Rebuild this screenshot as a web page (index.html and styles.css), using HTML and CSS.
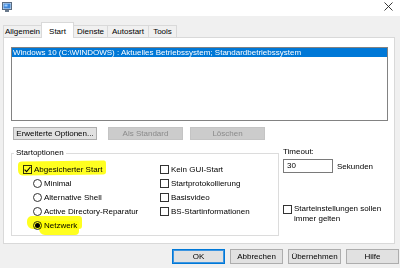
FILE: index.html
```html
<!DOCTYPE html>
<html>
<head>
<meta charset="utf-8">
<link rel="stylesheet" href="styles.css">
</head>
<body>
<div class="window">
  <div class="titlebar">
    <svg class="appicon" width="10" height="10" viewBox="0 0 10 10">
      <rect x="0.5" y="0.5" width="9" height="7" fill="#dfe6ee" stroke="#5a6b80"/>
      <rect x="1.5" y="1.5" width="7" height="5" fill="#3f86d8"/>
      <rect x="2.5" y="2.5" width="3" height="2" fill="#9fd0ff"/>
      <rect x="3" y="8" width="4" height="2" fill="#6a7a8c"/>
    </svg>
    <svg class="close" width="9" height="9" viewBox="0 0 9 9">
      <path d="M0.5 0.5 L8.5 8.5 M8.5 0.5 L0.5 8.5" stroke="#222" stroke-width="0.9" fill="none"/>
    </svg>
  </div>
  <div class="tabs">
    <div class="tab t1">Allgemein</div>
    <div class="tab t2 active">Start</div>
    <div class="tab t3">Dienste</div>
    <div class="tab t4">Autostart</div>
    <div class="tab t5">Tools</div>
  </div>
  <div class="panel">
    <div class="listbox">
      <div class="item selected">Windows 10 (C:\WINDOWS) : Aktuelles Betriebssystem; Standardbetriebssystem</div>
    </div>
    <div class="btnrow">
      <div class="btn wide">Erweiterte Optionen...</div>
      <div class="btn disabled">Als Standard</div>
      <div class="btn disabled">Löschen</div>
    </div>
    <div class="lower">
      <fieldset class="group">
        <legend>Startoptionen</legend>
        <div class="groupbody">
          <div class="col leftcol">
            <div class="row"><span class="cb checked"><svg width="7" height="7" viewBox="0 0 7 7"><path d="M0.6 3.6 L2.6 5.6 L6.4 1" stroke="#000" stroke-width="1.1" fill="none"/></svg></span>Abgesicherter Start</div>
            <div class="row sub"><span class="rb"></span>Minimal</div>
            <div class="row sub"><span class="rb"></span>Alternative Shell</div>
            <div class="row sub"><span class="rb"></span>Active Directory-Reparatur</div>
            <div class="row sub"><span class="rb on"><span class="dot"></span></span>Netzwerk</div>
          </div>
          <div class="col rightcol">
            <div class="row"><span class="cb"></span>Kein GUI-Start</div>
            <div class="row"><span class="cb"></span>Startprotokollierung</div>
            <div class="row"><span class="cb"></span>Basisvideo</div>
            <div class="row"><span class="cb"></span>BS-Startinformationen</div>
          </div>
        </div>
      </fieldset>
      <div class="timeout">
        <div class="label">Timeout:</div>
        <div class="inputrow">
          <div class="input">30</div>
          <span class="unit">Sekunden</span>
        </div>
        <div class="permrow"><span class="cb"></span><span class="permtext">Starteinstellungen sollen<br>immer gelten</span></div>
      </div>
    </div>
  </div>
  <div class="footer">
    <div class="btn fbtn default">OK</div>
    <div class="btn fbtn">Abbrechen</div>
    <div class="btn fbtn">Übernehmen</div>
    <div class="btn fbtn">Hilfe</div>
  </div>
  <div class="hl hl1"></div>
  <div class="hl hl2"></div>
  <div class="hl hl3"></div>
</div>
</body>
</html>
```

FILE: styles.css
```css
html, body {
  margin: 0;
  padding: 0;
}
body {
  background: #f0f0f0;
  font-family: "Liberation Sans", Arial, sans-serif;
  font-size: 8px;
  color: #000;
}
.window {
  position: relative;
  width: 400px;
  height: 268px;
  overflow: hidden;
}
.titlebar {
  height: 16px;
  background: #fff;
  display: flex;
  align-items: flex-start;
  justify-content: space-between;
}
.appicon {
  margin: 2px 0 0 2px;
}
.close {
  margin: 2px 7px 0 0;
}
.tabs {
  height: 22px;
  display: flex;
  align-items: flex-end;
  padding-left: 3px;
  position: relative;
  z-index: 1;
}
.tab {
  box-sizing: border-box;
  height: 12px;
  margin-bottom: 1px;
  border: 1px solid #d9d9d9;
  border-bottom: none;
  border-right: none;
  background: #f0f0f0;
  line-height: 11px;
  text-align: center;
  white-space: nowrap;
}
.tab.t5 { border-right: 1px solid #d9d9d9; }
.tab.active {
  height: 16px;
  margin-bottom: 0;
  background: #fff;
  border-right: 1px solid #d9d9d9;
  line-height: 17px;
}
.tab.active + .tab { border-left: none; }
.t1 { width: 38px; }
.t2 { width: 33px; }
.t3 { width: 33px; }
.t4 { width: 41px; }
.t5 { width: 29px; }
.panel {
  box-sizing: border-box;
  margin: -1px 5px 0 3px;
  height: 207px;
  background: #fff;
  border: 1px solid #d9d9d9;
  padding: 9px 6px 0 7px;
}
.listbox {
  box-sizing: border-box;
  width: 377px;
  height: 74px;
  border: 1px solid #828282;
  padding: 0;
}
.item {
  height: 9px;
  line-height: 9px;
  padding-left: 1px;
  white-space: nowrap;
  overflow: hidden;
}
.item.selected {
  background: #0078d7;
  color: #fff;
}
.btnrow {
  display: flex;
  margin: 6px 0 0 2px;
}
.btn {
  box-sizing: border-box;
  height: 13px;
  width: 75px;
  background: #e1e1e1;
  border: 1px solid #adadad;
  display: flex;
  align-items: center;
  justify-content: center;
  white-space: nowrap;
}
.btn.wide {
  width: 84px;
  margin-right: 11px;
}
.btn.disabled {
  background: #cccccc;
  border-color: #c4c4c4;
  color: #8a8a8a;
  margin-right: 7px;
}
.lower {
  display: flex;
  align-items: flex-start;
}
.group {
  box-sizing: border-box;
  margin: 8px 0 0 0;
  padding: 0;
  width: 268px;
  border: 1px solid #dcdcdc;
  min-width: 0;
}
.group legend {
  margin-left: 2px;
  padding: 0 2px;
  line-height: 10px;
  height: 10px;
}
.groupbody {
  display: flex;
  padding: 4px 0 3px 11px;
}
.col {
  display: flex;
  flex-direction: column;
}
.leftcol {
  width: 137px;
}
.row {
  height: 14px;
  display: flex;
  align-items: center;
  white-space: nowrap;
}
.row.sub {
  padding-left: 10px;
}
.cb {
  box-sizing: border-box;
  width: 9px;
  height: 9px;
  border: 1px solid #333;
  background: #fff;
  margin-right: 2px;
  flex: none;
  display: flex;
  align-items: center;
  justify-content: center;
}
.cb svg {
  display: block;
}
.rb {
  box-sizing: border-box;
  width: 9px;
  height: 9px;
  border: 1px solid #333;
  border-radius: 50%;
  background: #fff;
  margin-right: 2px;
  flex: none;
  display: flex;
  align-items: center;
  justify-content: center;
}
.rb .dot {
  width: 5px;
  height: 5px;
  border-radius: 50%;
  background: #000;
}
.timeout {
  margin: 7px 0 0 4px;
  display: flex;
  flex-direction: column;
}
.label {
  line-height: 10px;
  height: 10px;
}
.inputrow {
  display: flex;
  align-items: center;
  margin-top: 2px;
}
.input {
  box-sizing: border-box;
  width: 50px;
  height: 14px;
  border: 1px solid #7a7a7a;
  background: #fff;
  padding-left: 3px;
  line-height: 12px;
}
.unit {
  margin-left: 4px;
}
.permrow {
  display: flex;
  align-items: flex-start;
  margin-top: 31px;
}
.permrow .cb {
  margin-top: 1px;
}
.permtext {
  line-height: 10px;
  white-space: nowrap;
}
.footer {
  display: flex;
  justify-content: flex-end;
  gap: 5px;
  margin-top: 5px;
  padding-right: 1px;
}
.btn.fbtn {
  width: 53px;
  height: 15px;
}
.btn.default {
  border-color: #0078d7;
  box-shadow: inset 0 0 0 1px #3d95e0;
}
.hl {
  position: absolute;
  background: #ffff20;
  mix-blend-mode: multiply;
}
.hl1 {
  left: 18px;
  top: 161px;
  width: 88px;
  height: 14px;
  border-radius: 4px 2px 3px 5px;
  transform: rotate(-0.8deg);
}
.hl2 {
  left: 27px;
  top: 216px;
  width: 55px;
  height: 13px;
  border-radius: 5px 3px 3px 6px;
}
.hl3 {
  left: 39px;
  top: 221px;
  width: 40px;
  height: 14px;
  border-radius: 2px 2px 4px 6px;
}
```
